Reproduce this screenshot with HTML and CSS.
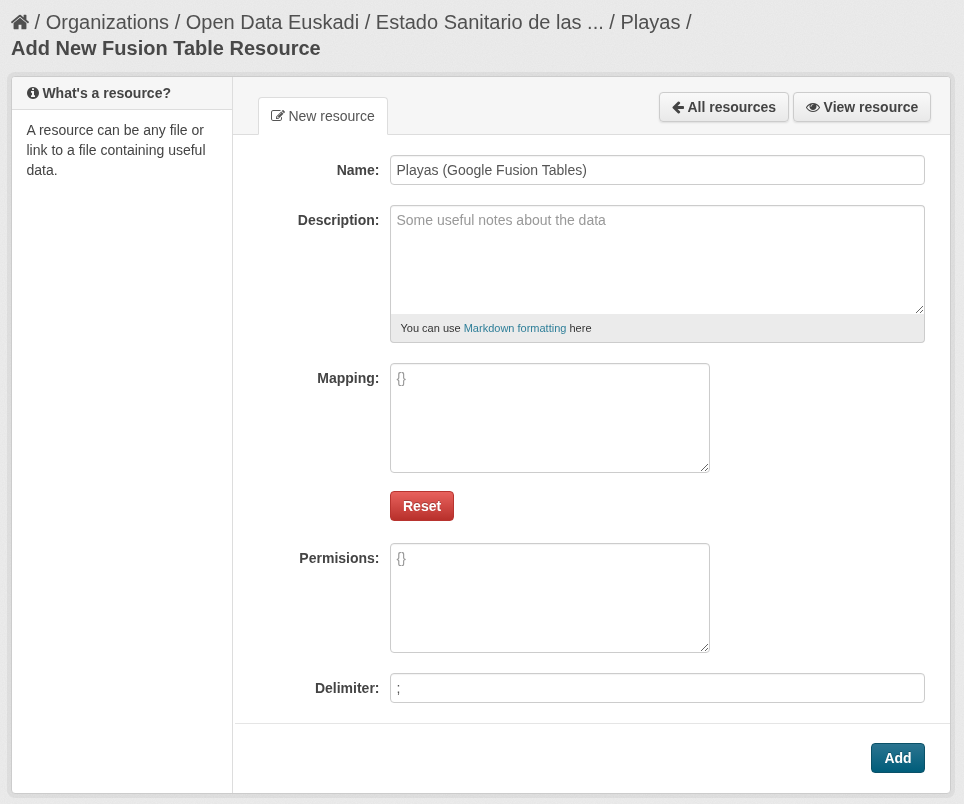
FILE: index.html
```html
<!DOCTYPE html>
<html lang="en">
<head>
<meta charset="utf-8">
<title>Add New Fusion Table Resource</title>
<link rel="stylesheet" href="styles.css">
</head>
<body>
<div class="page">
<header class="page-head">
  <div class="crumbs"><svg class="ic ic-home" viewBox="0 0 1792 1792"><path d="M1472 992v480q0 26-19 45t-45 19h-384v-384h-256v384h-384q-26 0-45-19t-19-45v-480q0-1 .5-3t.5-3l575-474 575 474q1 2 1 6zm223-69l-62 74q-8 9-21 11h-3q-13 0-21-7l-692-577-692 577q-12 8-24 7-13-2-21-11l-62-74q-8-10-7-23.500t11-21.500l719-599q32-26 76-26t76 26l244 204v-195q0-14 9-23t23-9h192q14 0 23 9t9 23v408l219 182q10 8 11 21.500t-7 23.500z"/></svg> / Organizations / Open Data Euskadi / Estado Sanitario de las ... / Playas /</div>
  <h1 class="title">Add New Fusion Table Resource</h1>
</header>
<main class="card">
  <aside class="side">
    <h2 class="side-head"><svg class="ic ic-sm ic-narrow" viewBox="128 0 1536 1792"><path d="M1152 1376v-160q0-14-9-23t-23-9h-96v-512q0-14-9-23t-23-9h-320q-14 0-23 9t-9 23v160q0 14 9 23t23 9h96v320h-96q-14 0-23 9t-9 23v160q0 14 9 23t23 9h448q14 0 23-9t9-23zm-128-896v-160q0-14-9-23t-23-9h-192q-14 0-23 9t-9 23v160q0 14 9 23t23 9h192q14 0 23-9t9-23zm640 416q0 209-103 385.500t-279.500 279.500-385.500 103-385.500-103-279.500-279.500-103-385.500 103-385.500 279.500-279.500 385.500-103 385.500 103 279.500 279.500 103 385.500z"/></svg> What's a resource?</h2>
    <p class="side-text">A resource can be any file or link to a file containing useful data.</p>
  </aside>
  <section class="content">
    <div class="tabbar">
      <div class="tab"><svg class="ic ic-sm ic-edit" viewBox="0 0 1792 1792"><path d="M888 1184l116-116-152-152-116 116v56h96v96h56zm440-720q-16-16-33 1l-350 350q-17 17-1 33t33-1l350-350q17-17 1-33zm80 594v190q0 119-84.500 203.500t-203.500 84.500h-832q-119 0-203.500-84.500t-84.500-203.500v-832q0-119 84.500-203.500t203.500-84.500h832q63 0 117 25 15 7 18 23 3 17-9 29l-49 49q-14 14-32 8-23-6-45-6h-832q-66 0-113 47t-47 113v832q0 66 47 113t113 47h832q66 0 113-47t47-113v-126q0-13 9-22l64-64q15-15 35-8t20 29zm-96-738l288 288-672 672h-288v-288zm444 132l-92 92-288-288 92-92q28-28 68-28t68 28l152 152q28 28 28 68t-28 68z"/></svg> New resource</div>
      <div class="actions">
        <a class="btn btn-first" href="#"><svg class="ic ic-sm ic-narrow" viewBox="128 0 1536 1792"><path d="M1664 896v128q0 53-32.500 90.500t-84.500 37.500h-704l293 294q38 36 38 90t-38 90l-75 76q-37 37-90 37-52 0-91-37l-651-652q-37-37-37-90 0-52 37-91l651-650q38-38 91-38 52 0 90 38l75 74q38 38 38 91t-38 91l-293 293h704q52 0 84.500 37.500t32.500 90.500z"/></svg> All resources</a>
        <a class="btn" href="#"><svg class="ic ic-sm" viewBox="0 0 1792 1792"><path d="M1664 960q-152-236-381-353 61 104 61 225 0 185-131.500 316.500t-316.500 131.500-316.500-131.500-131.500-316.500q0-121 61-225-229 117-381 353 133 205 333.500 326.500t434.500 121.500 434.500-121.500 333.500-326.500zm-720-384q0-20-14-34t-34-14q-125 0-214.500 89.500t-89.500 214.500q0 20 14 34t34 14 34-14 14-34q0-86 61-147t147-61q20 0 34-14t14-34zm848 384q0 34-20 69-140 230-376.500 368.500t-499.500 138.500-499.500-139-376.500-368q-20-35-20-69t20-69q140-229 376.500-368t499.500-139 499.500 139 376.500 368q20 35 20 69z"/></svg> View resource</a>
      </div>
    </div>
    <form class="form">
      <div class="fields">
        <div class="row">
          <label class="label">Name:</label>
          <input class="field" type="text" value="Playas (Google Fusion Tables)">
        </div>
        <div class="row">
          <label class="label">Description:</label>
          <div class="md-wrap">
            <textarea class="field area area-joined" placeholder="Some useful notes about the data"></textarea>
            <div class="md-info">You can use <a href="#">Markdown formatting</a> here</div>
          </div>
        </div>
        <div class="row row-tight">
          <label class="label">Mapping:</label>
          <textarea class="field area area-short" placeholder="{}"></textarea>
        </div>
        <div class="row row-reset">
          <span class="label"></span>
          <button class="btn-solid btn-red" type="button">Reset</button>
        </div>
        <div class="row">
          <label class="label">Permisions:</label>
          <textarea class="field area area-short" placeholder="{}"></textarea>
        </div>
        <div class="row">
          <label class="label">Delimiter:</label>
          <input class="field" type="text" value=";">
        </div>
      </div>
      <div class="form-actions">
        <button class="btn-solid btn-teal" type="button">Add</button>
      </div>
    </form>
  </section>
</main>
</div>
</body>
</html>
```
FILE: styles.css
```css
* { box-sizing: border-box; }
html, body { height: 100%; }
body {
  margin: 0;
  background-color: #e6e6e6;
  background-image: url("data:image/svg+xml,%3Csvg xmlns='http://www.w3.org/2000/svg' width='200' height='200'%3E%3Cfilter id='n'%3E%3CfeTurbulence type='fractalNoise' baseFrequency='.9' numOctaves='2' stitchTiles='stitch'/%3E%3CfeColorMatrix values='0 0 0 0 1 0 0 0 0 1 0 0 0 0 1 0 0 0 .35 -.05'/%3E%3C/filter%3E%3Crect width='200' height='200' filter='url(%23n)'/%3E%3C/svg%3E");
  font: 14px/20px "Liberation Sans", Arial, sans-serif;
  color: #444;
  overflow: hidden;
}
.page { height: 100%; padding: 9px 12px; will-change: transform; }
.ic { fill: currentColor; display: inline-block; }
.ic-home { width: 20px; height: 20px; vertical-align: -3px; margin: 0 -1px 0 -1px; }
.ic-sm { width: 14px; height: 14px; vertical-align: -1.5px; }
.ic-narrow { width: 12px; }
.ic-edit { color: #555; }
.page-head { height: 67px; }
.crumbs { font-size: 20px; line-height: 26px; color: #505050; white-space: nowrap; margin-left: -1px; }
.title { margin: 0 0 0 -1px; font-size: 20px; line-height: 26px; font-weight: bold; color: #484848; }
.card {
  display: flex;
  width: 940px;
  height: 718px;
  margin-left: -1px;
  background: #fff;
  border: 1px solid #ccc;
  border-radius: 4px;
  box-shadow: 0 0 0 4px rgba(0, 0, 0, .05);
}
.side { width: 221px; flex: none; border-right: 1px solid #ddd; }
.side-head {
  margin: 0;
  height: 33px;
  padding: 6px 14.5px;
  font-size: 14px;
  line-height: 20px;
  font-weight: bold;
  background: #f6f6f6;
  border-bottom: 1px solid #ddd;
  border-radius: 3px 0 0 0;
}
.side-text { margin: 0; padding: 10px 14.5px; }
.content { flex: 1; min-width: 0; display: flex; flex-direction: column; }
.tabbar {
  height: 58px;
  flex: none;
  position: relative;
  display: flex;
  justify-content: space-between;
  align-items: flex-start;
  padding: 15px 19px 0 25px;
  background: #f6f6f6;
  border-bottom: 1px solid #ddd;
  border-radius: 0 3px 0 0;
}
.tab {
  height: 38px;
  margin-top: 5px;
  padding: 8px 12px 0 11.5px;
  background: #fff;
  border: 1px solid #ddd;
  border-bottom-color: #fff;
  border-radius: 4px 4px 0 0;
  color: #555;
}
.actions { display: flex; gap: 4px; }
.btn {
  height: 30px;
  padding: 4px 11.75px;
  font-weight: bold;
  color: #444;
  text-decoration: none;
  background: linear-gradient(#f9f9f9, #e9e9e9);
  border: 1px solid #ccc;
  border-radius: 4px;
  box-shadow: 0 1px 2px rgba(0, 0, 0, .1);
  white-space: nowrap;
}
.btn-first { padding-left: 12.5px; }
.form { flex: 1; display: flex; flex-direction: column; }
.fields { padding: 20px 25px 0 0; }
.row { display: flex; margin-bottom: 20px; }
.row-tight { margin-bottom: 18px; }
.row-reset { margin-bottom: 22px; }
.label {
  width: 146.5px;
  flex: none;
  margin-right: 10.5px;
  padding-top: 5px;
  text-align: right;
  font-weight: bold;
  color: #444;
}
.field {
  flex: 1;
  min-width: 0;
  height: 30px;
  padding: 4px 5.5px;
  font: 14px/20px "Liberation Sans", Arial, sans-serif;
  color: #555;
  background: #fff;
  border: 1px solid #ccc;
  border-radius: 4px;
  box-shadow: inset 0 1px 1px rgba(0, 0, 0, .05);
  outline: none;
}
.field::placeholder { color: #999; opacity: 1; }
.area { display: block; height: 110px; }
.area-short { flex: none; width: 320px; }
.md-wrap { flex: 1; min-width: 0; }
.area-joined { width: 100%; border-bottom: 0; border-radius: 4px 4px 0 0; height: 109px; }
.md-info {
  height: 29px;
  padding: 0 9.5px;
  font-size: 11px;
  line-height: 28px;
  color: #333;
  background: #ebebeb;
  border: 1px solid #ccc;
  border-top: 0;
  border-radius: 0 0 4px 4px;
}
.md-info a { color: #2f7f99; text-decoration: none; }
.form-actions {
  flex: 1;
  margin-left: 2px;
  padding: 19px 25px 0 0;
  display: flex;
  justify-content: flex-end;
  align-items: flex-start;
  border-top: 1px solid #e5e5e5;
}
.btn-solid {
  height: 30px;
  padding: 0 12px;
  font: bold 14px/20px "Liberation Sans", Arial, sans-serif;
  color: #fff;
  border-radius: 4px;
  text-shadow: 0 -1px 0 rgba(0, 0, 0, .25);
}
.btn-red {
  background: linear-gradient(#e8625d, #b8302b);
  border: 1px solid #b8342f;
}
.btn-teal {
  width: 54px;
  background: linear-gradient(#2b7490, #005d7a);
  border: 1px solid #0a5168;
}
```
